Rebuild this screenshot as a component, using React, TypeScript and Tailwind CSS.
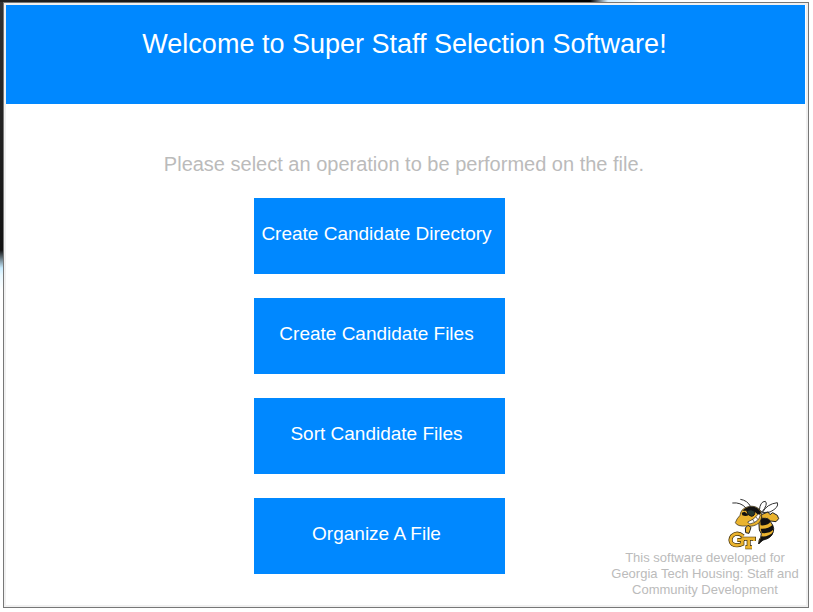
const operations = [
  "Create Candidate Directory",
  "Create Candidate Files",
  "Sort Candidate Files",
  "Organize A File",
];

function BuzzLogo() {
  return (
    <svg width="54" height="52" viewBox="24 24 162 156" role="img" aria-label="Georgia Tech Buzz" strokeLinejoin="round">
      <g stroke="#333" fill="none" strokeWidth="3">
        <path d="M37 39 Q62 36 78 54" />
        <path d="M61 28 Q82 31 92 50" />
      </g>
      <g fill="#fff" stroke="#333" strokeWidth="3">
        <path d="M118 62 Q120 34 136 34 Q145 42 126 66Z" />
        <path d="M127 68 Q140 42 172 38 Q178 52 150 66Z" />
      </g>
      <path d="M124 74 L144 66 L150 74 L158 68 L172 76 L176 86 L168 95 L152 93 L142 85 L126 92Z" fill="#eab32e" stroke="#222" strokeWidth="3" />
      <path d="M116 88 Q140 78 152 96 Q168 116 156 134 Q146 148 128 150 L116 162 Q116 148 122 142 Q128 132 118 120Z" fill="#eab32e" stroke="#222" strokeWidth="3" />
      <g fill="#111">
        <path d="M120 86 Q142 82 152 94 Q146 108 122 106Z" />
        <path d="M122 116 Q144 118 158 104 L161 118 Q148 132 125 129Z" />
        <path d="M124 139 Q144 142 160 126 Q156 144 132 149 L115 162Z" />
      </g>
      <path d="M46 98 Q50 86 60 76 Q62 56 84 50 Q108 44 122 62 Q130 82 118 98 Q102 112 78 108 Q52 110 46 98Z" fill="#eab32e" stroke="#222" strokeWidth="2" />
      <path d="M68 62 Q82 46 102 50 Q118 54 124 70 L114 74 Q100 58 88 62Z" fill="#111" />
      <path d="M65 68 L74 65 L86 75 Q78 80 67 76Z" fill="#111" />
      <path d="M80 62 Q94 55 104 64 Q106 78 94 79 Q82 76 80 62Z" fill="#24382e" stroke="#111" strokeWidth="3" />
      <path d="M83 96 Q103 89 115 72 L121 75 Q117 96 89 102Z" fill="#fff" stroke="#222" strokeWidth="2" />
      <path d="M98 88 L103 97 M108 81 L114 89" stroke="#222" strokeWidth="2" />
      <path d="M76 114 L84 106 L93 112 L87 130 L77 128Z" fill="#eab32e" stroke="#222" strokeWidth="3" />
      <g fill="none" stroke="#3a2a08" strokeWidth="12" strokeLinejoin="miter">
        <path d="M70 139 Q52 124 37 137 Q26 150 37 162 Q50 170 67 162 V150 H52" />
        <path d="M68 153 V146 H102 V153 M86 146 V172 M76 172 H96" />
      </g>
      <g fill="none" stroke="#eab32e" strokeWidth="8" strokeLinejoin="miter">
        <path d="M70 139 Q52 124 37 137 Q26 150 37 162 Q50 170 67 162 V150 H52" />
        <path d="M68 153 V146 H102 V153 M86 146 V172 M76 172 H96" />
      </g>
    </svg>
  );
}

export default function App() {
  return (
    <div className="flex min-h-screen flex-col bg-white bg-[linear-gradient(to_right,#222_0,#000_590px,#d8f0ff_608px,#e8f7ff_630px,#fff_640px),linear-gradient(#333_0,#111_250px,#c8ecff_268px,#e8f8ff_275px,#fff_290px)] bg-[length:100%_2px,3px_100%] bg-no-repeat pt-[2px] pr-1 pb-1 pl-[3px] font-['Liberation_Sans',Arial,sans-serif]">
      <div className="flex flex-1 flex-col border border-[#777] bg-[#f0f0f0] p-[2px]">
        <div className="flex flex-1 flex-col bg-white">
          <header className="mr-px h-[99px] bg-[#0088ff] pt-[21px] pr-0.5 text-center text-white">
            <h1 className="text-[27px] leading-9">Welcome to Super Staff Selection Software!</h1>
          </header>
          <main className="flex flex-1 flex-col">
            <p className="h-[94px] pt-12 pr-1 text-center text-xl leading-6 text-[#bbb]">
              Please select an operation to be performed on the file.
            </p>
            <div className="grid flex-1 grid-cols-[248fr_251px_301fr]">
              <div className="col-start-2 flex flex-col gap-6">
                {operations.map((label) => (
                  <button key={label} type="button" className="h-[76px] bg-[#0088ff] pr-1.5 pb-1 text-[19px] whitespace-nowrap text-white">
                    {label}
                  </button>
                ))}
              </div>
              <footer className="flex flex-col items-end self-end pb-[7px] text-center text-[13px] leading-4 text-[#bbb]">
                <div className="mr-6">
                  <BuzzLogo />
                </div>
                <p className="w-[202px]">
                  This software developed for Georgia Tech Housing: Staff and Community Development
                </p>
              </footer>
            </div>
          </main>
        </div>
      </div>
    </div>
  );
}
